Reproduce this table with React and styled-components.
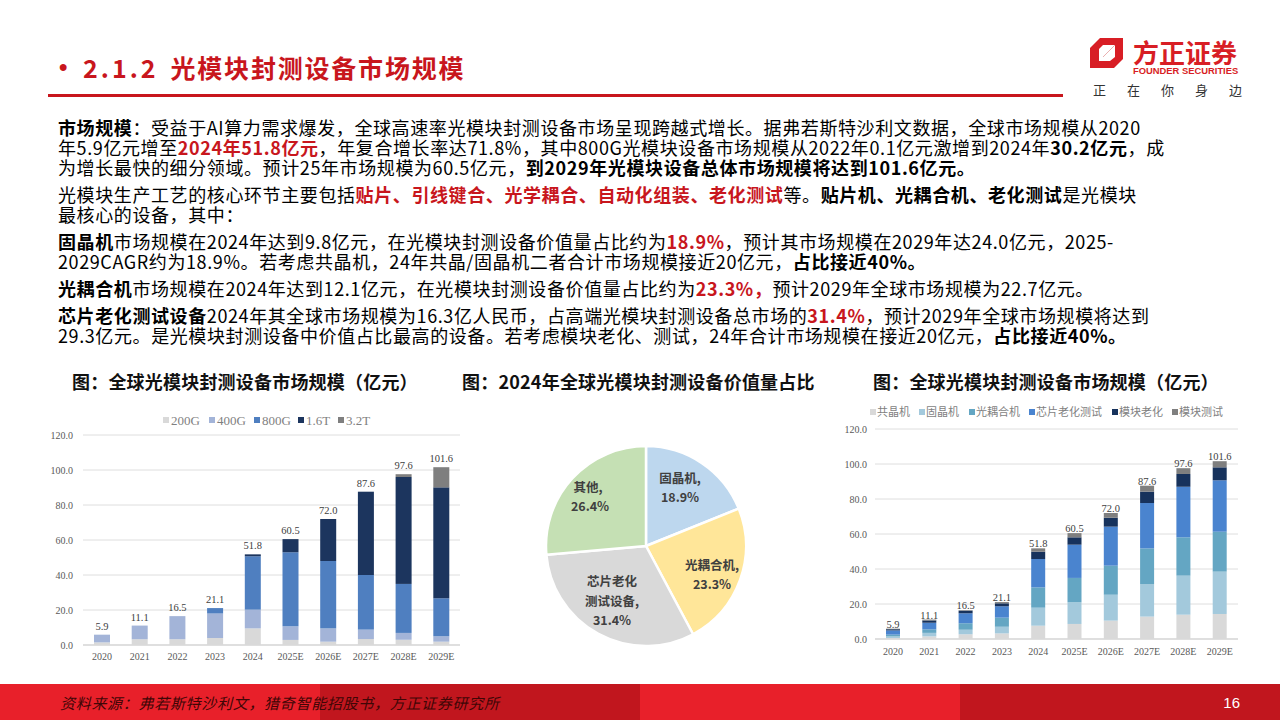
import React from 'react';
import styled, { createGlobalStyle } from 'styled-components';

const RED = '#c8161d';
const YEARS = ['2020', '2021', '2022', '2023', '2024', '2025E', '2026E', '2027E', '2028E', '2029E'];

const GlobalStyle = createGlobalStyle`
  html, body { margin: 0; padding: 0; background: #fff; }
  body { font-family: "Noto Sans CJK SC", sans-serif; }
`;

const Slide = styled.div`
  width: 1280px;
  height: 720px;
  display: flex;
  flex-direction: column;
  overflow: hidden;
  background: #fff;
`;

const Header = styled.header`
  height: 100px;
  box-sizing: border-box;
  padding: 0 38px 0 48px;
  display: flex;
  align-items: flex-end;
  justify-content: space-between;
`;

const TitleBar = styled.div`
  width: 1015px;
  display: flex;
  align-items: center;
  padding: 0 0 11px 11px;
  margin-bottom: 3px;
  box-sizing: border-box;
  border-bottom: 3px solid ${RED};
  color: ${RED};
  font-family: "Liberation Sans Narrow", "Noto Sans CJK SC", sans-serif;
  font-weight: 700;
  font-size: 25px;
  line-height: 32px;
  letter-spacing: 1.8px;
`;

const Bullet = styled.span`
  font-family: "Liberation Sans", sans-serif;
  font-size: 24px;
  width: 24px;
  letter-spacing: 0;
`;

const SectionNo = styled.span`
  letter-spacing: 3px;
  margin-right: 12px;
`;

const Logo = styled.div`
  width: 152px;
  display: flex;
  flex-direction: column;
  margin-bottom: 2px;
`;

const LogoTop = styled.div`
  display: flex;
  align-items: flex-start;
  gap: 10px;
`;

const LogoNames = styled.div`
  display: flex;
  flex-direction: column;
`;

const LogoCn = styled.div`
  font-size: 26px;
  font-weight: 700;
  line-height: 28px;
  color: #d81e25;
`;

const LogoEn = styled.div`
  font-family: "Liberation Sans", sans-serif;
  font-weight: 700;
  font-size: 9.4px;
  line-height: 10px;
  color: #d81e25;
  white-space: nowrap;
`;

const Slogan = styled.div`
  display: flex;
  justify-content: space-between;
  padding-left: 3px;
  margin-top: 6px;
  font-size: 13px;
  line-height: 16px;
  color: #333;
`;

const Body = styled.section`
  padding: 17px 0 0 58px;
  font-family: "Liberation Sans Narrow", "Noto Sans CJK SC", sans-serif;
  font-size: 18px;
  letter-spacing: 0.6px;
  line-height: 20px;
  color: #000;
`;

const Para = styled.p`
  margin: 0;
  white-space: nowrap;
  & + & { margin-top: 7px; }
`;

const Strong = styled.b`
  font-weight: 700;
`;

const Hot = styled.b`
  font-weight: 700;
  color: ${RED};
`;

const Charts = styled.section`
  display: grid;
  grid-template-columns: 410px 380px 420px;
  padding-left: 50px;
  margin-top: 25px;
`;

const Figure = styled.figure`
  margin: 0;
  display: flex;
  flex-direction: column;
`;

const Caption = styled.figcaption`
  padding-left: ${p => p.$indent}px;
  font-family: "Liberation Sans Narrow", "Noto Sans CJK SC", sans-serif;
  font-size: 18px;
  font-weight: 700;
  line-height: 22px;
  letter-spacing: 0.2px;
  white-space: nowrap;
  color: #111;
`;

const ChartSvg = styled.svg`
  display: block;
  overflow: visible;
`;

const AxisLabel = styled.text`
  font-family: "Liberation Serif", "Noto Sans CJK SC", serif;
  font-size: 10px;
  fill: #595959;
`;

const LegendLabel = styled.text`
  font-family: "Liberation Serif", "Noto Sans CJK SC", serif;
  font-size: ${p => p.$size}px;
  fill: #7f7f7f;
`;

const ValueLabel = styled.text`
  font-family: "Liberation Serif", serif;
  font-size: 10.5px;
  fill: #404040;
`;

const PieLabel = styled.text`
  font-family: "Noto Sans CJK SC", sans-serif;
  font-weight: 700;
  font-size: 12.5px;
  fill: #404040;
`;

const Footer = styled.footer`
  margin-top: auto;
  height: 36px;
  display: flex;
  align-items: center;
  justify-content: space-between;
  padding: 0 40px 0 60px;
  background: linear-gradient(to right, #e8202a 0 25%, #c1161e 25% 50%, #e8202a 50% 75%, #c1161e 75% 100%);
`;

const Source = styled.span`
  font-style: italic;
  font-size: 15px;
  letter-spacing: 0.7px;
  color: #400606;
`;

const PageNo = styled.span`
  font-family: "Liberation Sans Narrow", "Liberation Sans", sans-serif;
  font-size: 15px;
  color: #fff;
`;

const leftChart = {
  width: 410, height: 275, y0: 253, scale: 1.75, x0: 52, step: 37.7, barW: 16,
  legendY: 28, legendSize: 13, textOffset: 8, axisRight: 23, gridLeft: 33, gridRight: 410,
  xLabelY: 264, labelGap: 5,
  colors: ['#d9d9d9', '#a3b4d8', '#4f7fc0', '#1c355e', '#7f7f7f'],
  legend: [['200G', 113], ['400G', 159], ['800G', 204], ['1.6T', 248], ['3.2T', 288]],
  data: [
    [1.5, 4.4],
    [3.3, 7.8],
    [3.3, 13.2],
    [4.0, 14.0, 3.1],
    [9.5, 10.7, 30.5, 1.1],
    [2.9, 7.8, 42.3, 7.5],
    [1.9, 7.6, 38.5, 24.0],
    [3.4, 5.4, 31.2, 47.6],
    [3.0, 3.9, 28.0, 61.1, 1.6],
    [1.9, 3.1, 21.7, 63.4, 11.5],
  ],
};

const rightChart = {
  width: 400, height: 275, y0: 247, scale: 1.75, x0: 53, step: 36.3, barW: 14,
  legendY: 20, legendSize: 11, textOffset: 7, axisRight: 27, gridLeft: 35, gridRight: 398,
  xLabelY: 259, labelGap: 1,
  colors: ['#d9d9d9', '#a3c9dc', '#64a6c3', '#4a84cf', '#17325c', '#7f7f7f'],
  legend: [['共晶机', 30], ['固晶机', 79], ['光耦合机', 129], ['芯片老化测试', 189], ['模块老化', 272], ['模块测试', 332]],
  data: [
    [0.6, 0.9, 1.0, 2.4, 0.7, 0.3],
    [1.5, 2.0, 2.0, 3.8, 1.3, 0.5],
    [2.7, 2.6, 3.7, 5.7, 1.5, 0.3],
    [3.2, 3.8, 5.2, 6.5, 1.7, 0.7],
    [7.6, 10.3, 11.6, 16.2, 4.2, 1.9],
    [8.6, 12.4, 13.9, 19.0, 4.2, 2.4],
    [10.5, 14.8, 16.6, 22.3, 5.1, 2.7],
    [12.8, 18.6, 20.4, 25.9, 6.5, 3.4],
    [13.9, 22.3, 21.9, 28.9, 7.3, 3.3],
    [14.3, 24.2, 22.8, 29.4, 7.4, 3.5],
  ],
};

const pieSlices = [
  { value: 18.9, color: '#bdd7ee' },
  { value: 23.3, color: '#ffe699' },
  { value: 31.4, color: '#d9d9d9' },
  { value: 26.4, color: '#c5e0b4' },
];

const pieLabels = [
  { x: 220, y: 85, t: '固晶机,' }, { x: 220, y: 104, t: '18.9%' },
  { x: 252, y: 172, t: '光耦合机,' }, { x: 252, y: 191, t: '23.3%' },
  { x: 152, y: 188, t: '芯片老化' }, { x: 152, y: 208, t: '测试设备,' }, { x: 152, y: 227, t: '31.4%' },
  { x: 128, y: 94, t: '其他,' }, { x: 130, y: 113, t: '26.4%' },
];

const StackedChart = ({ cfg }) => {
  const { width, height, y0, scale, x0, step, barW, colors, data, legend, legendY, legendSize, textOffset,
    axisRight, gridLeft, gridRight, xLabelY, labelGap } = cfg;
  return (
    <ChartSvg width={width} height={height}>
      {legend.map(([name, sx], i) => (
        <g key={name}>
          <rect x={sx} y={legendY - 3} width={6} height={6} fill={colors[i]} />
          <LegendLabel x={sx + textOffset} y={legendY} dominantBaseline="central" $size={legendSize}>{name}</LegendLabel>
        </g>
      ))}
      {[0, 20, 40, 60, 80, 100, 120].map(v => {
        const y = y0 - v * scale;
        return (
          <g key={v}>
            <line x1={gridLeft} x2={gridRight} y1={y} y2={y} stroke={v === 0 ? '#bfbfbf' : '#dedede'} strokeWidth={1} />
            <AxisLabel x={axisRight} y={y} textAnchor="end" dominantBaseline="central">{v.toFixed(1)}</AxisLabel>
          </g>
        );
      })}
      {data.map((segs, i) => {
        const cx = x0 + i * step;
        const total = segs.reduce((a, b) => a + b, 0);
        let acc = 0;
        return (
          <g key={YEARS[i]}>
            {segs.map((s, k) => {
              const top = y0 - (acc + s) * scale;
              acc += s;
              return <rect key={k} x={cx - barW / 2} y={top} width={barW} height={s * scale} fill={colors[k]} />;
            })}
            <ValueLabel x={cx} y={y0 - total * scale - labelGap} textAnchor="middle">{total.toFixed(1)}</ValueLabel>
            <AxisLabel x={cx} y={xLabelY} textAnchor="middle" dominantBaseline="central">{YEARS[i]}</AxisLabel>
          </g>
        );
      })}
    </ChartSvg>
  );
};

const slicePath = (cx, cy, r, a0, a1) => {
  const x0 = cx + r * Math.cos(a0), y0 = cy + r * Math.sin(a0);
  const x1 = cx + r * Math.cos(a1), y1 = cy + r * Math.sin(a1);
  const large = a1 - a0 > Math.PI ? 1 : 0;
  return `M${cx},${cy} L${x0},${y0} A${r},${r} 0 ${large} 1 ${x1},${y1} Z`;
};

const PieChart = () => {
  const cx = 186, cy = 154, r = 100;
  let start = -Math.PI / 2;
  return (
    <ChartSvg width={380} height={275}>
      {pieSlices.map(s => {
        const end = start + (s.value / 100) * Math.PI * 2;
        const d = slicePath(cx, cy, r, start, end);
        start = end;
        return <path key={s.value} d={d} fill={s.color} stroke="#fff" strokeWidth={2.5} strokeLinejoin="round" />;
      })}
      {pieLabels.map(l => (
        <PieLabel key={l.t} x={l.x} y={l.y} textAnchor="middle" dominantBaseline="central">{l.t}</PieLabel>
      ))}
    </ChartSvg>
  );
};

const LogoMark = () => (
  <svg width="33" height="30" viewBox="0 0 33 30">
    <path d="M10 0 H33 V21 L24 30 H0 V10 Z" fill="#d81e25" />
    <path d="M13 7 H25 V19 L20 23 H9 V11 Z" fill="#fff" />
    <path d="M25 7 L13 19" stroke="#eab0b0" strokeWidth="1" />
  </svg>
);

export default function App() {
  return (
    <Slide>
      <GlobalStyle />
      <Header>
        <TitleBar>
          <Bullet>•</Bullet>
          <SectionNo>2.1.2</SectionNo>
          光模块封测设备市场规模
        </TitleBar>
        <Logo>
          <LogoTop>
            <LogoMark />
            <LogoNames>
              <LogoCn>方正证券</LogoCn>
              <LogoEn>FOUNDER SECURITIES</LogoEn>
            </LogoNames>
          </LogoTop>
          <Slogan>
            <span>正</span><span>在</span><span>你</span><span>身</span><span>边</span>
          </Slogan>
        </Logo>
      </Header>

      <Body>
        <Para>
          <Strong>市场规模</Strong>：受益于AI算力需求爆发，全球高速率光模块封测设备市场呈现跨越式增长。据弗若斯特沙利文数据，全球市场规模从2020<br />
          年5.9亿元增至<Hot>2024年51.8亿元</Hot>，年复合增长率达71.8%，其中800G光模块设备市场规模从2022年0.1亿元激增到2024年<Strong>30.2亿元</Strong>，成<br />
          为增长最快的细分领域。预计25年市场规模为60.5亿元，<Strong>到2029年光模块设备总体市场规模将达到101.6亿元。</Strong>
        </Para>
        <Para>
          光模块生产工艺的核心环节主要包括<Hot>贴片、引线键合、光学耦合、自动化组装、老化测试</Hot>等。<Strong>贴片机、光耦合机、老化测试</Strong>是光模块<br />
          最核心的设备，其中：
        </Para>
        <Para>
          <Strong>固晶机</Strong>市场规模在2024年达到9.8亿元，在光模块封测设备价值量占比约为<Hot>18.9%</Hot>，预计其市场规模在2029年达24.0亿元，2025-<br />
          2029CAGR约为18.9%。若考虑共晶机，24年共晶/固晶机二者合计市场规模接近20亿元，<Strong>占比接近40%。</Strong>
        </Para>
        <Para>
          <Strong>光耦合机</Strong>市场规模在2024年达到12.1亿元，在光模块封测设备价值量占比约为<Hot>23.3%，</Hot>预计2029年全球市场规模为22.7亿元。
        </Para>
        <Para>
          <Strong>芯片老化测试设备</Strong>2024年其全球市场规模为16.3亿人民币，占高端光模块封测设备总市场的<Hot>31.4%</Hot>，预计2029年全球市场规模将达到<br />
          29.3亿元。是光模块封测设备中价值占比最高的设备。若考虑模块老化、测试，24年合计市场规模在接近20亿元，<Strong>占比接近40%。</Strong>
        </Para>
      </Body>

      <Charts>
        <Figure>
          <Caption $indent={22}>图：全球光模块封测设备市场规模（亿元）</Caption>
          <StackedChart cfg={leftChart} />
        </Figure>
        <Figure>
          <Caption $indent={2}>图：2024年全球光模块封测设备价值量占比</Caption>
          <PieChart />
        </Figure>
        <Figure>
          <Caption $indent={33}>图：全球光模块封测设备市场规模（亿元）</Caption>
          <StackedChart cfg={rightChart} />
        </Figure>
      </Charts>

      <Footer>
        <Source>资料来源：弗若斯特沙利文，猎奇智能招股书，方正证券研究所</Source>
        <PageNo>16</PageNo>
      </Footer>
    </Slide>
  );
}
